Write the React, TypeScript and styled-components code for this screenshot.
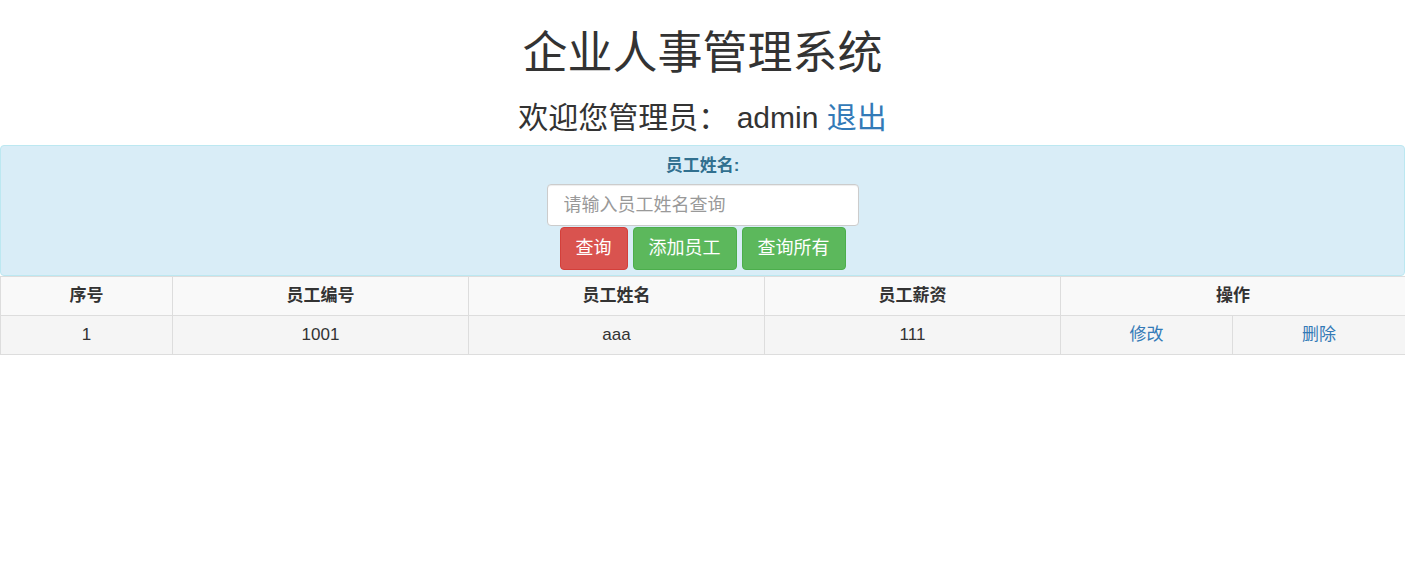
import React from "react";
import styled, { createGlobalStyle } from "styled-components";

const GlobalStyle = createGlobalStyle`
  html, body { margin: 0; padding: 0; background: #fff; }
  body {
    font-family: "Liberation Sans", Arial, "Noto Sans CJK SC", sans-serif;
    color: #333;
  }
  * { box-sizing: border-box; }
`;

const Page = styled.div`
  display: flex;
  flex-direction: column;
  align-items: stretch;
`;

const Title = styled.h1`
  margin: 28px 0 0;
  font-size: 45px;
  line-height: 52px;
  font-weight: 400;
  text-align: center;
  color: #333;
`;

const Welcome = styled.h2`
  margin: 21px 0 0;
  font-size: 30px;
  line-height: 34px;
  font-weight: 400;
  text-align: center;
  color: #333;
`;

const Link = styled.a`
  color: #337ab7;
  text-decoration: none;
  cursor: pointer;
`;

const SearchPanel = styled.form`
  margin-top: 10px;
  background: #d9edf7;
  border: 1px solid #bce8f1;
  border-radius: 4px;
  padding: 9px 15px 5px;
  display: flex;
  flex-direction: column;
  align-items: center;
`;

const FieldLabel = styled.label`
  font-size: 17px;
  line-height: 22px;
  font-weight: 700;
  color: #31708f;
`;

const SearchInput = styled.input`
  margin-top: 7px;
  width: 312px;
  height: 42px;
  padding: 0 16px;
  font-family: inherit;
  font-size: 18px;
  color: #555;
  background: #fff;
  border: 1px solid #ccc;
  border-radius: 4px;
  box-shadow: inset 0 1px 1px rgba(0, 0, 0, 0.075);
  outline: none;
  &::placeholder { color: #999; }
`;

const ButtonRow = styled.div`
  margin-top: 1px;
  display: flex;
  gap: 5px;
`;

const Button = styled.button<{ $variant: "danger" | "success" }>`
  height: 43px;
  padding: 0 15px;
  font-family: inherit;
  font-size: 18px;
  line-height: 23px;
  color: #fff;
  border-radius: 4px;
  cursor: pointer;
  background: ${(p) => (p.$variant === "danger" ? "#d9534f" : "#5cb85c")};
  border: 1px solid ${(p) => (p.$variant === "danger" ? "#d43f3a" : "#4cae4c")};
`;

const Table = styled.table`
  width: 100%;
  border-collapse: collapse;
  table-layout: fixed;
  margin-top: 0;
`;

const HeadCell = styled.th`
  border: 1px solid #ddd;
  padding: 8px;
  font-size: 17px;
  line-height: 22px;
  font-weight: 700;
  text-align: center;
  background: #f9f9f9;
  color: #333;
`;

const Row = styled.tr`
  background: #f5f5f5;
`;

const Cell = styled.td`
  border: 1px solid #ddd;
  padding: 8px;
  font-size: 17px;
  line-height: 22px;
  text-align: center;
  color: #333;
`;

const employees = [{ id: 1, no: "1001", name: "aaa", salary: "111" }];

export default function App() {
  return (
    <Page>
      <GlobalStyle />
      <Title>企业人事管理系统</Title>
      <Welcome>
        欢迎您管理员： admin <Link>退出</Link>
      </Welcome>
      <SearchPanel onSubmit={(e) => e.preventDefault()}>
        <FieldLabel>员工姓名:</FieldLabel>
        <SearchInput placeholder="请输入员工姓名查询" />
        <ButtonRow>
          <Button type="button" $variant="danger">查询</Button>
          <Button type="button" $variant="success">添加员工</Button>
          <Button type="button" $variant="success">查询所有</Button>
        </ButtonRow>
      </SearchPanel>
      <Table>
        <colgroup>
          <col style={{ width: 172 }} />
          <col style={{ width: 296 }} />
          <col style={{ width: 296 }} />
          <col style={{ width: 296 }} />
          <col style={{ width: 172 }} />
          <col style={{ width: 173 }} />
        </colgroup>
        <thead>
          <tr>
            <HeadCell>序号</HeadCell>
            <HeadCell>员工编号</HeadCell>
            <HeadCell>员工姓名</HeadCell>
            <HeadCell>员工薪资</HeadCell>
            <HeadCell colSpan={2}>操作</HeadCell>
          </tr>
        </thead>
        <tbody>
          {employees.map((e) => (
            <Row key={e.id}>
              <Cell>{e.id}</Cell>
              <Cell>{e.no}</Cell>
              <Cell>{e.name}</Cell>
              <Cell>{e.salary}</Cell>
              <Cell><Link>修改</Link></Cell>
              <Cell><Link>删除</Link></Cell>
            </Row>
          ))}
        </tbody>
      </Table>
    </Page>
  );
}
